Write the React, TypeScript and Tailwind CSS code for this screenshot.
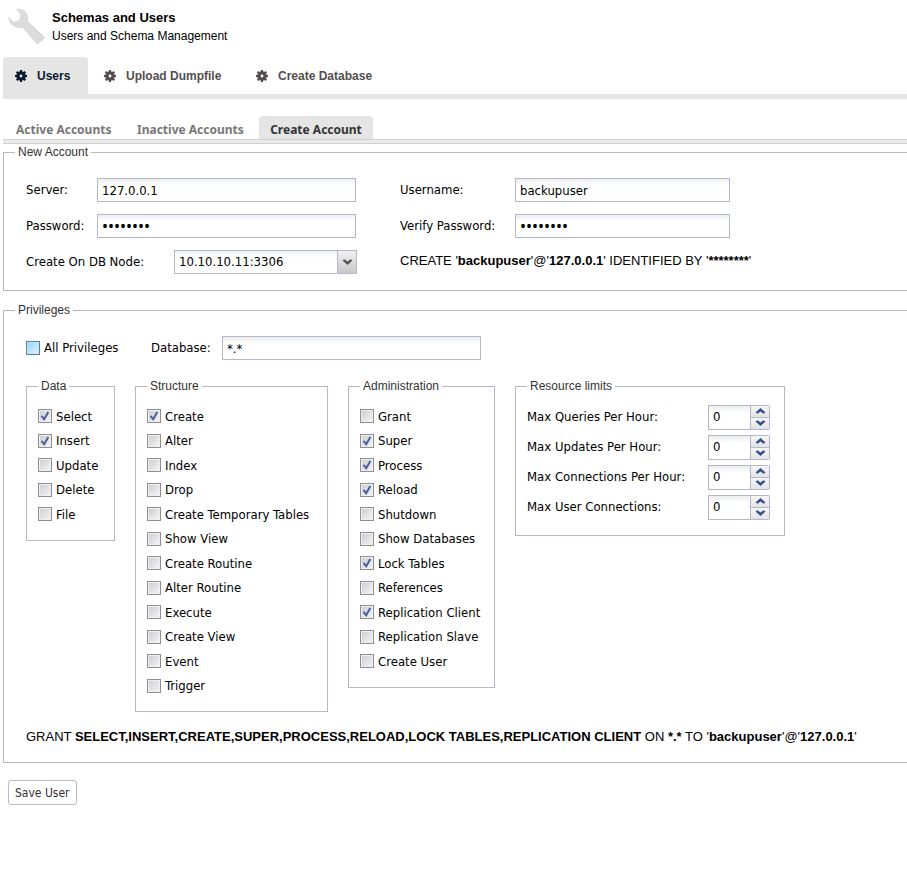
import { useId, useState } from 'react';
import type { ReactNode } from 'react';

const ARIAL = "font-['Liberation_Sans',Arial,sans-serif]";
const BOX =
  'h-6 border border-[#b5b8c8] bg-white bg-linear-to-b from-[#eceeee] to-white to-30% px-1 text-black outline-none';

function Wrench() {
  return (
    <svg width="38" height="38" viewBox="0 0 38 38" aria-hidden="true">
      <path
        d="M8 1.200C12 .2 16.500 1.500 18.800 5.200C20.500 8 20.800 11 19.600 13.500L35.700 29C36.300 29.700 36.200 30.300 35.600 31L30.400 36C29.800 36.500 29 36.400 28.500 35.700L14.500 19.700C11.500 20.500 8 20 5.500 18.300C2 16 0 12 .5 8.500L5.300 13.800L10.800 12.200L12.500 6.500Z"
        fill="#dcdcdc"
      />
      <path d="M19.600 13.500L35.700 29C36.300 29.700 36.200 30.300 35.600 31" fill="none" stroke="#c9c9c9" />
    </svg>
  );
}

function Gear() {
  return (
    <svg width="12" height="12" viewBox="0 0 12 12" fill="currentColor" aria-hidden="true">
      <path
        fillRule="evenodd"
        d="M5 0h2l.3 1.500 1 .4L9.600 1 11 2.400l-.9 1.300.4 1L12 5v2l-1.500.3-.4 1 .9 1.300L9.600 11l-1.300-.9-1 .4L7 12H5l-.3-1.500-1-.4L2.400 11 1 9.600l.9-1.300-.4-1L0 7V5l1.500-.3.4-1L1 2.400 2.400 1l1.300.9 1-.4zM6 4.600a1.400 1.400 0 1 0 0 2.800 1.400 1.400 0 0 0 0-2.800z"
      />
    </svg>
  );
}

function Group({ title, className = '', children }: { title: string; className?: string; children: ReactNode }) {
  return (
    <fieldset className={`min-w-0 border border-[#b5b8c8] ${className}`}>
      <legend className={`ml-[11px] px-[3px] text-[12px] leading-[17px] text-[#333] ${ARIAL}`}>{title}</legend>
      {children}
    </fieldset>
  );
}

function Check({ label, on = false, hot = false }: { label: string; on?: boolean; hot?: boolean }) {
  const [checked, setChecked] = useState(on);
  const skin = hot
    ? 'border-[#4f83a5] from-[#8fd3f7] to-[#e2f5ff] shadow-[inset_0_0_0_1px_#c4e6f8]'
    : 'border-[#8f8f8f] from-[#c9ccd2] to-[#f6f6f6] shadow-[inset_0_0_0_1px_#f0f0f0]';
  return (
    <label className="flex items-center gap-1 whitespace-nowrap">
      <span className="grid pb-px">
        <input
          type="checkbox"
          checked={checked}
          onChange={(e) => setChecked(e.target.checked)}
          className={`col-start-1 row-start-1 size-[14px] appearance-none border bg-linear-to-br ${skin}`}
        />
        {checked && (
          <svg
            className="pointer-events-none col-start-1 row-start-1"
            width="14"
            height="14"
            viewBox="0 0 14 14"
            aria-hidden="true"
          >
            <path d="M3.500 6.800L6.200 10.200L10.300 3" fill="none" stroke="#4a5f9c" strokeWidth="2" />
          </svg>
        )}
      </span>
      {label}
    </label>
  );
}

function CheckList({ items, checked }: { items: string[]; checked: string[] }) {
  return (
    <ul className="px-[11px] pt-[9px] pb-[13px]">
      {items.map((item) => (
        <li key={item} className="flex items-center odd:h-[25px] even:h-6">
          <Check label={item} on={checked.includes(item)} />
        </li>
      ))}
    </ul>
  );
}

function Field({
  label,
  value,
  type = 'text',
  labelClass,
  inputClass,
}: {
  label: string;
  value: string;
  type?: string;
  labelClass: string;
  inputClass: string;
}) {
  const id = useId();
  const size = type === 'password' ? "font-['Noto_Sans',sans-serif] text-base" : 'text-[13px]';
  return (
    <div className="flex items-center">
      <label htmlFor={id} className={labelClass}>
        {label}
      </label>
      <input id={id} type={type} defaultValue={value} className={`${BOX} ${size} ${inputClass}`} />
    </div>
  );
}

function Chevron({ up = false, className = '' }: { up?: boolean; className?: string }) {
  return (
    <svg width="11" height="6" viewBox="0 0 11 6" fill="currentColor" className={className} aria-hidden="true">
      <path d={up ? 'M5.500 0L10.500 4.500L8.500 5.800L5.500 3.500L2.500 5.800L.5 4.500Z' : 'M5.500 6L10.500 1.500L8.500 .2L5.500 2.500L2.500 .2L.5 1.500Z'} />
    </svg>
  );
}

function Limit({ label }: { label: string }) {
  const id = useId();
  const [value, setValue] = useState(0);
  const step =
    'flex flex-1 items-center justify-center bg-linear-to-b from-[#f6f6f6] to-[#e4e4e8] text-[#34518c]';
  return (
    <div className="flex h-[30px] items-center justify-between">
      <label htmlFor={id}>{label}</label>
      <div className="flex h-[25px]">
        <input
          id={id}
          value={value}
          onChange={(e) => setValue(Number(e.target.value) || 0)}
          className="w-[43px] border border-[#b5b8c8] bg-white bg-linear-to-b from-[#eceeee] to-white to-30% px-1 text-[13px] outline-none"
        />
        <div className="flex w-[19px] flex-col divide-y divide-[#b5b8c8] rounded-r-xs border border-l-0 border-[#b5b8c8]">
          <button type="button" aria-label="Increase" className={step} onClick={() => setValue(value + 1)}>
            <Chevron up />
          </button>
          <button type="button" aria-label="Decrease" className={step} onClick={() => setValue(value - 1)}>
            <Chevron />
          </button>
        </div>
      </div>
    </div>
  );
}

const DATA = ['Select', 'Insert', 'Update', 'Delete', 'File'];
const STRUCTURE = [
  'Create',
  'Alter',
  'Index',
  'Drop',
  'Create Temporary Tables',
  'Show View',
  'Create Routine',
  'Alter Routine',
  'Execute',
  'Create View',
  'Event',
  'Trigger',
];
const ADMIN = [
  'Grant',
  'Super',
  'Process',
  'Reload',
  'Shutdown',
  'Show Databases',
  'Lock Tables',
  'References',
  'Replication Client',
  'Replication Slave',
  'Create User',
];
const LIMITS = ['Max Queries Per Hour:', 'Max Updates Per Hour:', 'Max Connections Per Hour:', 'Max User Connections:'];

export default function App() {
  return (
    <div className="min-h-screen overflow-x-hidden bg-white pl-[3px] font-['DejaVu_Sans_Condensed','DejaVu_Sans',Tahoma,sans-serif] text-[13px] text-black">
      <header className={`flex h-[57px] gap-[6px] pt-2 pl-[5px] ${ARIAL}`}>
        <Wrench />
        <div className="pt-px leading-[18px]">
          <h1 className="font-bold">Schemas and Users</h1>
          <p className="text-[12px] leading-[18px]">Users and Schema Management</p>
        </div>
      </header>

      <nav className={`flex border-b-[5px] border-[#e5e5e5] text-[12px] font-bold text-[#544e4e] ${ARIAL}`}>
        <a href="#users" className="flex h-[37px] w-[85px] items-center gap-[10px] rounded-t bg-[#e5e5e5] pl-3 text-[#0b1a33]">
          <Gear />
          Users
        </a>
        <a href="#upload" className="flex h-[37px] w-[152px] items-center gap-[10px] pl-4">
          <Gear />
          Upload Dumpfile
        </a>
        <a href="#database" className="flex h-[37px] items-center gap-[10px] pl-4">
          <Gear />
          Create Database
        </a>
      </nav>

      <nav className="mt-[17px] flex font-['Noto_Sans',Tahoma,sans-serif] text-[12px] font-bold text-[#777]">
        <a href="#active" className="flex h-[23px] w-[121px] items-center pt-1 pl-[13px] whitespace-nowrap">
          Active Accounts
        </a>
        <a href="#inactive" className="flex h-[23px] w-[135px] items-center pt-1 pl-[13px] whitespace-nowrap">
          Inactive Accounts
        </a>
        <a
          href="#create"
          className="flex h-[23px] w-[114px] items-center justify-center rounded-t bg-[#e5e5e5] pt-1 whitespace-nowrap text-[#333]"
        >
          Create Account
        </a>
      </nav>
      <div className="h-[5px] border-y border-[#d0d0d0] bg-[#eaeaea]" />

      <form>
        <Group title="New Account" className="border-r-0">
          <div className="flex pt-[17px] pb-4 pl-[22px]">
            <div className="flex w-[374px] flex-col gap-3">
              <Field label="Server:" value="127.0.0.1" labelClass="w-[71px]" inputClass="w-[259px]" />
              <Field label="Password:" value="password" type="password" labelClass="w-[71px]" inputClass="w-[259px]" />
              <div className="flex items-center">
                <label htmlFor="node" className="w-[148px]">
                  Create On DB Node:
                </label>
                <div className="grid w-[183px]">
                  <select id="node" className={`${BOX} col-start-1 row-start-1 w-full appearance-none text-[13px]`}>
                    <option>10.10.10.11:3306</option>
                  </select>
                  <span className="pointer-events-none col-start-1 row-start-1 flex w-5 items-center justify-center justify-self-end rounded-r-xs border border-[#b5b8c8] bg-linear-to-b from-[#f2f2f2] to-[#c8c8c8] text-[#555]">
                    <Chevron />
                  </span>
                </div>
              </div>
            </div>
            <div className="flex flex-col gap-3">
              <Field label="Username:" value="backupuser" labelClass="w-[115px]" inputClass="w-[215px]" />
              <Field
                label="Verify Password:"
                value="password"
                type="password"
                labelClass="w-[115px]"
                inputClass="w-[215px]"
              />
              <p className={`leading-[22px] whitespace-nowrap ${ARIAL}`}>
                CREATE '<b>backupuser</b>'@'<b>127.0.0.1</b>' IDENTIFIED BY '<b>********</b>'
              </p>
            </div>
          </div>
        </Group>

        <Group title="Privileges" className="mt-[11px] border-r-0">
          <div className="pt-[17px] pb-[15px] pl-[22px]">
            <div className="flex">
              <div className="flex w-[125px]">
                <Check label="All Privileges" hot />
              </div>
              <Field label="Database:" value="*.*" labelClass="w-[71px]" inputClass="w-[259px]" />
            </div>
            <div className="mt-[18px] flex items-start gap-5">
              <Group title="Data" className="w-[89px]">
                <CheckList items={DATA} checked={['Select', 'Insert']} />
              </Group>
              <Group title="Structure" className="w-[193px]">
                <CheckList items={STRUCTURE} checked={['Create']} />
              </Group>
              <Group title="Administration" className="w-[147px]">
                <CheckList items={ADMIN} checked={['Super', 'Process', 'Reload', 'Lock Tables', 'Replication Client']} />
              </Group>
              <Group title="Resource limits" className="w-[270px]">
                <div className="pt-[7px] pr-[14px] pb-[13px] pl-[11px]">
                  {LIMITS.map((label) => (
                    <Limit key={label} label={label} />
                  ))}
                </div>
              </Group>
            </div>
            <p className={`mt-[15px] leading-5 whitespace-nowrap ${ARIAL}`}>
              GRANT <b>SELECT,INSERT,CREATE,SUPER,PROCESS,RELOAD,LOCK TABLES,REPLICATION CLIENT</b> ON <b>*.*</b> TO '
              <b>backupuser</b>'@'<b>127.0.0.1</b>'
            </p>
          </div>
        </Group>

        <button
          type="button"
          className="mt-[17px] ml-[5px] h-[25px] rounded-[3px] border border-[#bbb] bg-white px-[6px] text-[12px] text-[#333]"
        >
          Save User
        </button>
      </form>
    </div>
  );
}
